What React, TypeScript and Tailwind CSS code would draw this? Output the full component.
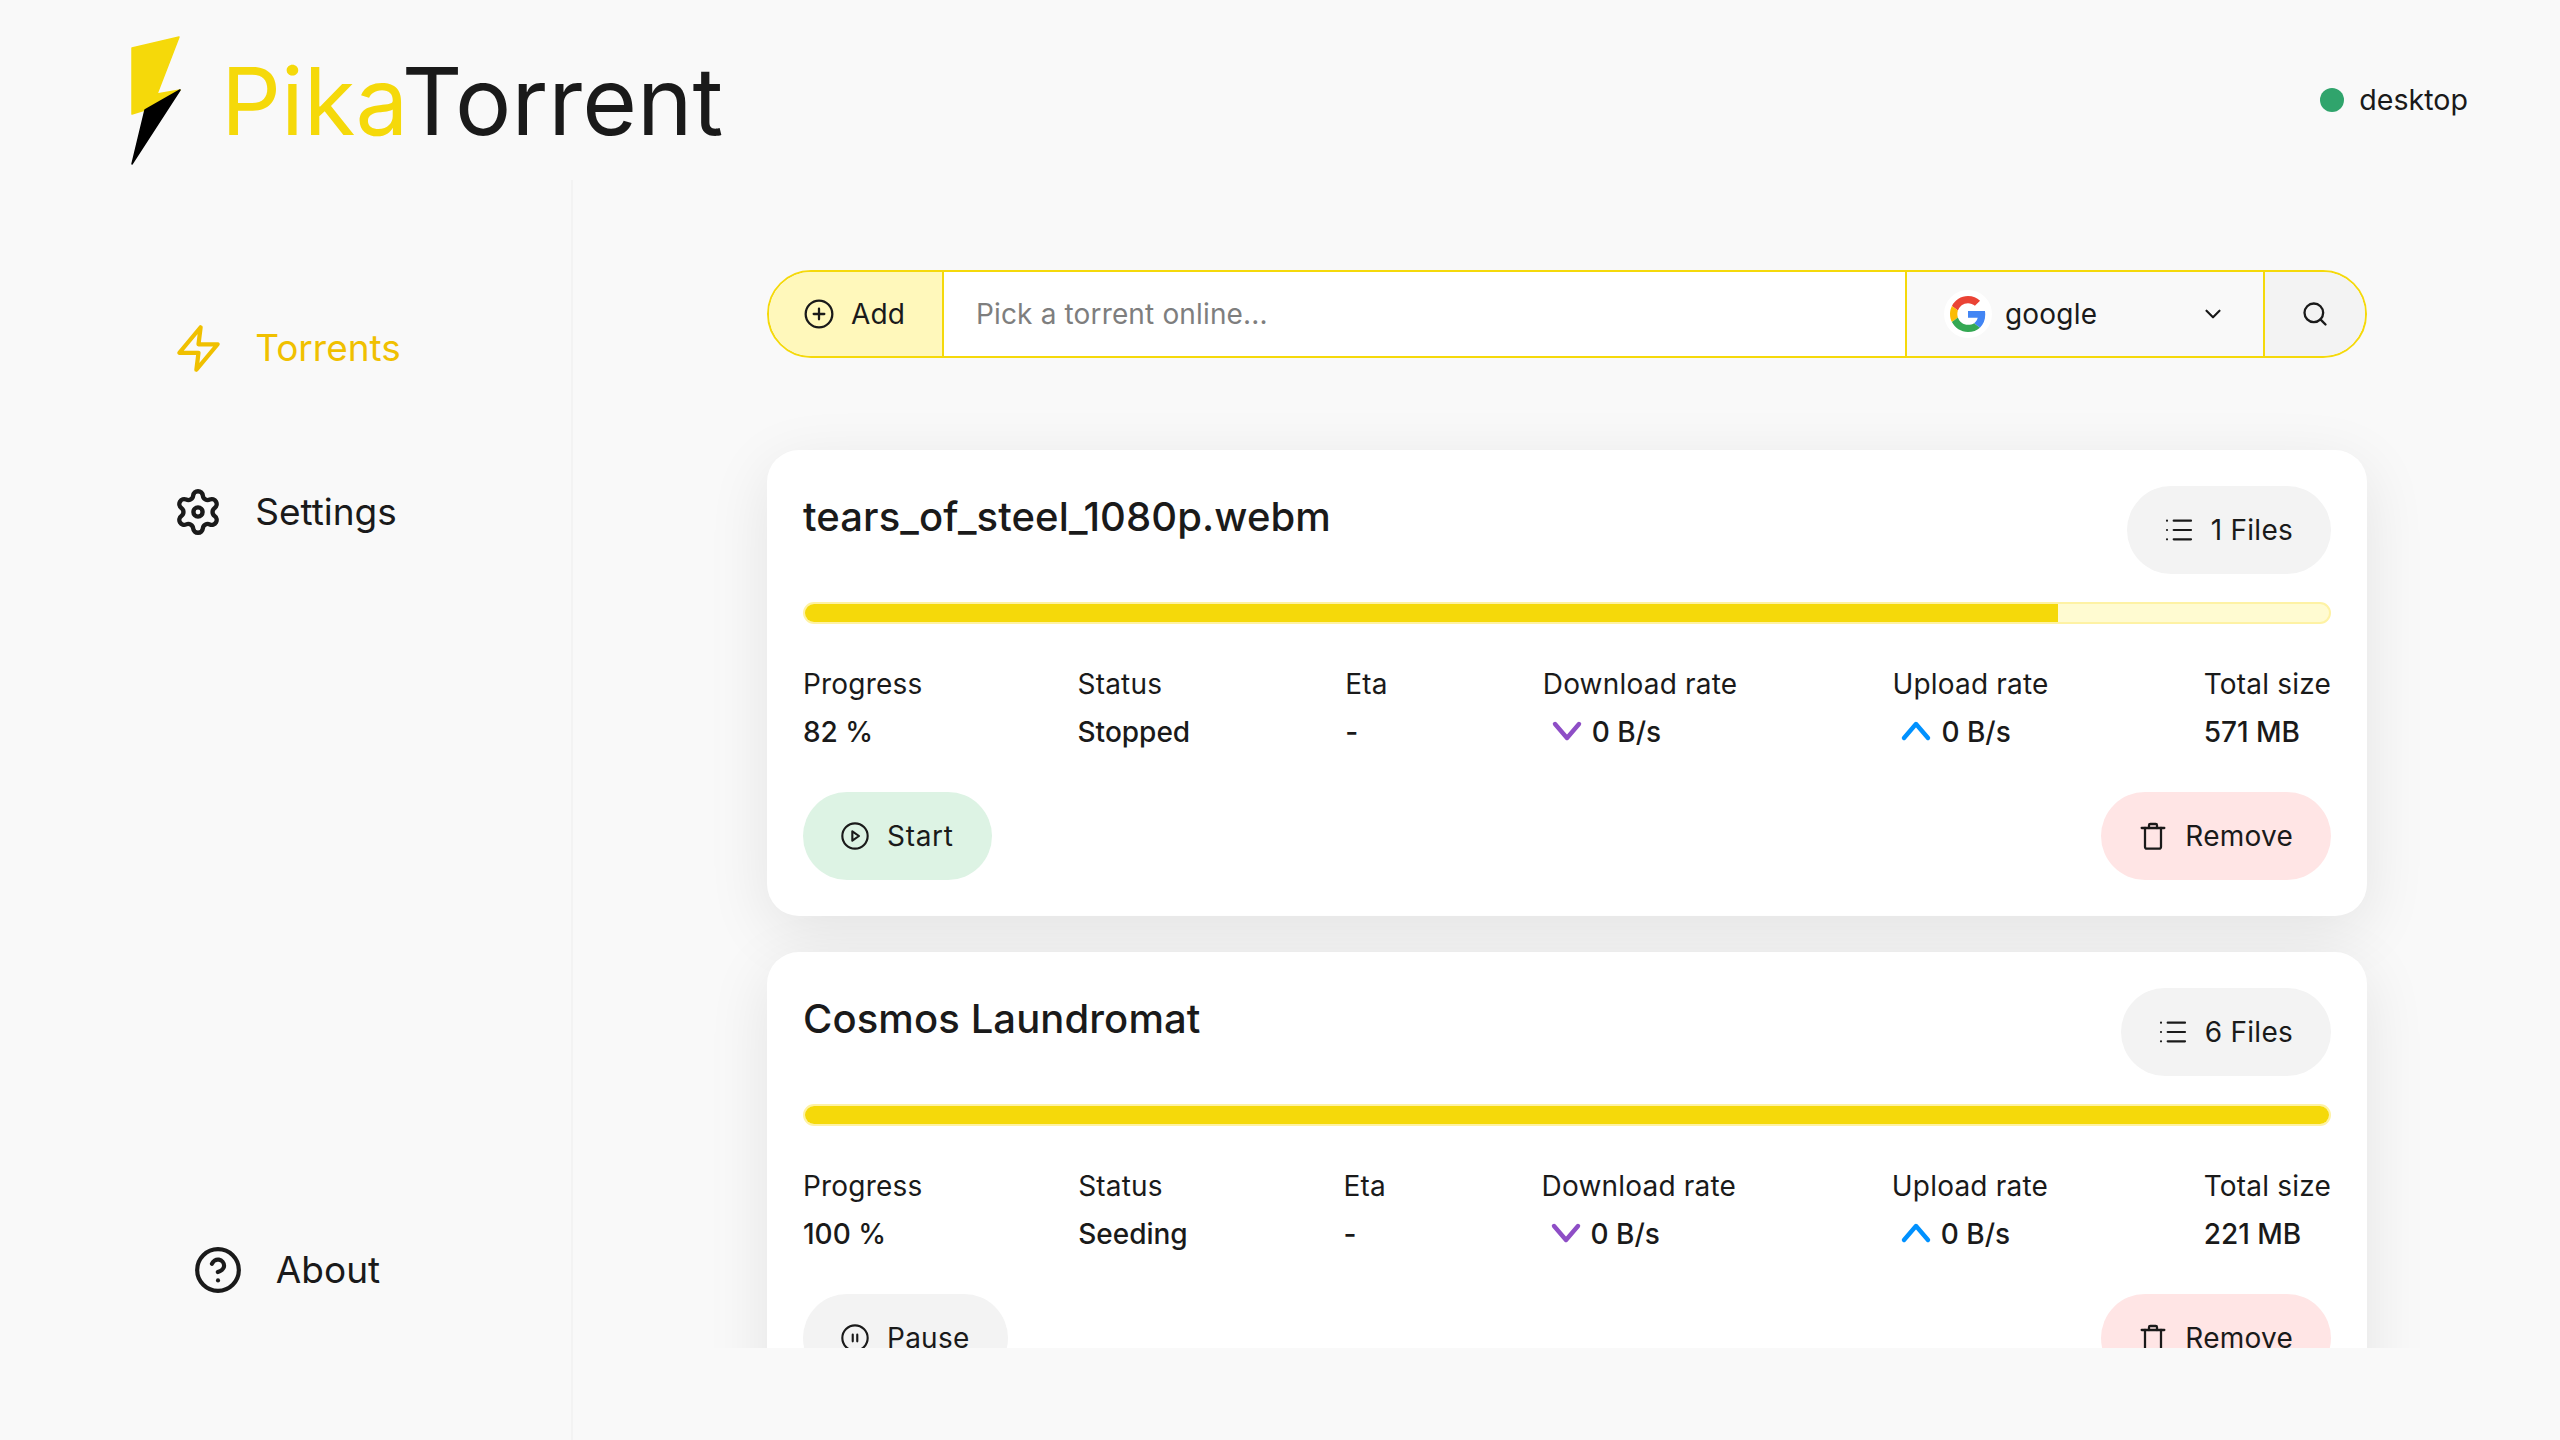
import React from "react";
import { CircleHelp, List, Search, ChevronDown, CirclePlus } from "lucide-react";

function Bolt() {
  return (
    <svg width="60" height="140" viewBox="0 0 60 140" className="shrink-0">
      <polygon points="7,17 54,6 32,63 55,59 20,79 7,83" fill="#f5d90a" stroke="#f5d90a" strokeWidth="1.5" strokeLinejoin="round" />
      <polygon points="55,59 20,79 7,133" fill="#000" stroke="#000" strokeWidth="1.5" strokeLinejoin="round" />
    </svg>
  );
}

function Zap() {
  return (
    <svg width="51" height="51" viewBox="0 0 24 24" fill="none" stroke="currentColor" strokeWidth="2" strokeLinecap="round" strokeLinejoin="round">
      <polygon points="13 2 3 14 12 14 11 22 21 10 12 10 13 2" />
    </svg>
  );
}

function Gear() {
  return (
    <svg width="50" height="50" viewBox="0 0 24 24" fill="none" stroke="currentColor" strokeWidth="2.1" strokeLinecap="round" strokeLinejoin="round">
      <path d="M9.671 4.136a2.34 2.34 0 0 1 4.659 0 2.34 2.34 0 0 0 3.319 1.915 2.34 2.34 0 0 1 2.33 4.033 2.34 2.34 0 0 0 0 3.831 2.34 2.34 0 0 1-2.33 4.033 2.34 2.34 0 0 0-3.319 1.915 2.34 2.34 0 0 1-4.659 0 2.34 2.34 0 0 0-3.32-1.915 2.34 2.34 0 0 1-2.33-4.033 2.34 2.34 0 0 0 0-3.831A2.34 2.34 0 0 1 6.35 6.051a2.34 2.34 0 0 0 3.32-1.915" />
      <circle cx="12" cy="12" r="2.2" />
    </svg>
  );
}

function PlayCircle() {
  return (
    <svg width="32" height="32" viewBox="0 0 24 24" fill="none" stroke="currentColor" strokeWidth="1.6" strokeLinecap="round" strokeLinejoin="round">
      <circle cx="12" cy="12" r="9.5" />
      <polygon points="10,8.5 15,12 10,15.5" />
    </svg>
  );
}

function PauseCircle() {
  return (
    <svg width="32" height="32" viewBox="0 0 24 24" fill="none" stroke="currentColor" strokeWidth="1.6" strokeLinecap="round">
      <circle cx="12" cy="12" r="9.5" />
      <line x1="10.3" y1="9.5" x2="10.3" y2="14.5" />
      <line x1="13.7" y1="9.5" x2="13.7" y2="14.5" />
    </svg>
  );
}

function Trash() {
  return (
    <svg width="32" height="32" viewBox="0 0 24 24" fill="none" stroke="currentColor" strokeWidth="1.7" strokeLinecap="round" strokeLinejoin="round">
      <path d="M3.5 6h17" />
      <path d="M9 6V4a1 1 0 0 1 1-1h4a1 1 0 0 1 1 1v2" />
      <path d="M6 6v14a1.5 1.5 0 0 0 1.5 1.5h9A1.5 1.5 0 0 0 18 20V6" />
    </svg>
  );
}

function GoogleLogo() {
  return (
    <div className="flex h-[48px] w-[48px] shrink-0 items-center justify-center rounded-full bg-white">
      <svg width="36" height="36" viewBox="0 0 48 48">
        <path fill="#EA4335" d="M24 9.5c3.54 0 6.71 1.22 9.21 3.6l6.85-6.85C35.9 2.38 30.47 0 24 0 14.62 0 6.51 5.38 2.56 13.22l7.98 6.19C12.43 13.72 17.74 9.5 24 9.5z" />
        <path fill="#4285F4" d="M46.98 24.55c0-1.57-.15-3.09-.38-4.55H24v9.02h12.94c-.58 2.96-2.26 5.48-4.78 7.18l7.73 6c4.51-4.18 7.09-10.36 7.09-17.65z" />
        <path fill="#FBBC05" d="M10.53 28.59c-.48-1.45-.76-2.99-.76-4.59s.27-3.14.76-4.59l-7.98-6.19C.92 16.46 0 20.12 0 24c0 3.88.92 7.54 2.56 10.78l7.97-6.19z" />
        <path fill="#34A853" d="M24 48c6.48 0 11.93-2.13 15.89-5.81l-7.73-6c-2.15 1.45-4.92 2.3-8.16 2.3-6.26 0-11.57-4.22-13.47-9.91l-7.98 6.19C6.51 42.62 14.62 48 24 48z" />
      </svg>
    </div>
  );
}

function Rate({ value, up }: { value: string; up?: boolean }) {
  return (
    <div className="flex items-center gap-[5px] pl-[4px]">
      <svg width="40" height="40" viewBox="0 0 40 40" fill="none" stroke={up ? "#0091ff" : "#8e4ec6"} strokeWidth="4.4" strokeLinecap="round" strokeLinejoin="round">
        {up ? <path d="M8 26 L20 12 L32 26" /> : <path d="M8 12 L20 26 L32 12" />}
      </svg>
      <span>{value}</span>
    </div>
  );
}

function Stat({ label, children }: { label: string; children: React.ReactNode }) {
  return (
    <div className="flex flex-col">
      <div className="h-[48px] leading-[48px] tracking-[0.2px]">{label}</div>
      <div className="h-[48px] leading-[48px] font-medium">{children}</div>
    </div>
  );
}

function Pill({ icon, text, bg, wide }: { icon: React.ReactNode; text: string; bg: string; wide?: boolean }) {
  return (
    <button className={`flex h-[88px] items-center gap-[16px] rounded-[44px] pl-[36px] pr-[38px] text-[28px] ${bg}`}>
      {icon}
      <span className={wide ? "tracking-[0.7px]" : "tracking-[0.25px]"}>{text}</span>
    </button>
  );
}

function Card(p: {
  title: string;
  files: string;
  pct: number;
  status: string;
  size: string;
  paused?: boolean;
}) {
  return (
    <div className="shrink-0 rounded-[32px] bg-white p-[36px] shadow-[0_16px_64px_rgba(0,0,0,0.09)]">
      <div className="flex items-start justify-between">
        <div className="text-[40px] font-medium leading-[62px] tracking-[0.1px]">{p.title}</div>
        <Pill icon={<List size={32} strokeWidth={1.6} />} text={p.files} bg="bg-[#f3f3f3]" />
      </div>
      <div className="mt-[28px] h-[22px] overflow-hidden rounded-[11px] border-2 border-[#fef2a4] bg-[#fffbd1]">
        <div className="h-full bg-[#f5d90a]" style={{ width: `${p.pct * 1.0025}%` }} />
      </div>
      <div className="mt-[36px] flex justify-between text-[28px]">
        <Stat label="Progress">{p.pct} %</Stat>
        <Stat label="Status">{p.status}</Stat>
        <Stat label="Eta">-</Stat>
        <Stat label="Download rate"><Rate value="0 B/s" /></Stat>
        <Stat label="Upload rate"><Rate value="0 B/s" up /></Stat>
        <Stat label="Total size">{p.size}</Stat>
      </div>
      <div className="mt-[36px] flex justify-between">
        {p.paused ? (
          <Pill icon={<PauseCircle />} text="Pause" bg="bg-[#f3f3f3]" />
        ) : (
          <Pill icon={<PlayCircle />} text="Start" bg="bg-[#ddf3e4]" wide />
        )}
        <Pill icon={<Trash />} text="Remove" bg="bg-[#ffe5e5]" />
      </div>
    </div>
  );
}

export default function App() {
  return (
    <div className="flex h-screen flex-col overflow-hidden bg-[#f9f9f9] font-['Inter',sans-serif] text-[#1a1a1a]">
      <header className="flex h-[180px] shrink-0 items-center justify-between pl-[125px] pr-[92px] pt-[21px]">
        <div className="flex items-center">
          <Bolt />
          <div className="ml-[36px] text-[94px] leading-none">
            <span className="text-[#f5d90a]">Pika</span>
            <span>Torrent</span>
          </div>
        </div>
        <div className="flex items-center gap-[15px] text-[28.6px]">
          <div className="h-[24px] w-[24px] rounded-full bg-[#30a46c]" />
          <span>desktop</span>
        </div>
      </header>
      <div className="flex min-h-0 flex-1">
        <aside className="flex w-[573px] shrink-0 flex-col items-center justify-between border-r-2 border-[#f3f3f3] pb-[146px] pt-[144px]">
          <nav className="flex flex-col gap-[116px] text-[37px]">
            <div className="flex h-[48px] items-center gap-[31px] text-[#f0c000]">
              <div className="ml-[2px] flex w-[52px] justify-center"><Zap /></div>
              <span>Torrents</span>
            </div>
            <div className="flex h-[48px] items-center gap-[31px]">
              <div className="ml-[2px] flex w-[52px] justify-center"><Gear /></div>
              <span>Settings</span>
            </div>
          </nav>
          <div className="flex h-[48px] items-center gap-[33px] text-[37px]">
            <div className="ml-[2px]"><CircleHelp size={50} strokeWidth={2} /></div>
            <span>About</span>
          </div>
        </aside>
        <main className="flex min-w-0 flex-1 flex-col pb-[92px]">
          <div className="ml-[194px] mt-[90px] flex h-[88px] w-[1600px] shrink-0 overflow-hidden rounded-[44px] border-2 border-[#f5d90a]">
            <div className="flex w-[175px] shrink-0 items-center gap-[16px] border-r-2 border-[#f5d90a] bg-[#fff8bb] pl-[34px] text-[28px] tracking-[0.2px]">
              <CirclePlus size={32} strokeWidth={1.7} />
              <span>Add</span>
            </div>
            <div className="flex flex-1 items-center bg-white pl-[32px] text-[28px] tracking-[0.15px] text-[#7e7e7e]">Pick a torrent online...</div>
            <div className="flex w-[360px] shrink-0 items-center border-x-2 border-[#f5d90a] bg-[#f9f9f9] pl-[37px] pr-[37px] text-[28px] tracking-[0.2px]">
              <GoogleLogo />
              <span className="ml-[13px] flex-1">google</span>
              <ChevronDown size={26} strokeWidth={2} />
            </div>
            <div className="flex flex-1 max-w-[100px] items-center justify-center bg-[#f3f3f3]">
              <Search size={28} strokeWidth={2} />
            </div>
          </div>
          <div className="flex min-h-0 flex-1 flex-col gap-[36px] overflow-hidden pl-[194px] pr-[193px] pt-[92px]">
            <Card title="tears_of_steel_1080p.webm" files="1 Files" pct={82} status="Stopped" size="571 MB" />
            <Card title="Cosmos Laundromat" files="6 Files" pct={100} status="Seeding" size="221 MB" paused />
          </div>
        </main>
      </div>
    </div>
  );
}
